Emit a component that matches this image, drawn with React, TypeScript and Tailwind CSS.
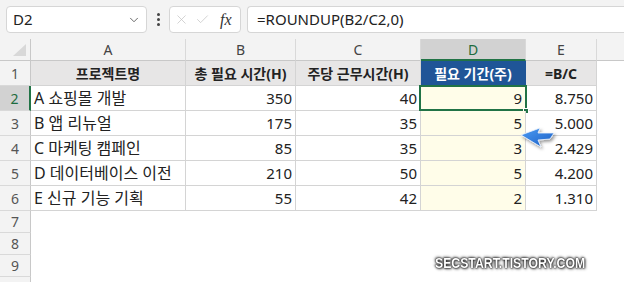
import { ChevronDown, X, Check } from 'lucide-react';

const FONT = { fontFamily: '"Noto Sans", "Noto Sans CJK KR", sans-serif' };

const colW = ['w-[155px]', 'w-[110px]', 'w-[125px]', 'w-[105px]', 'w-[71px]'];
const letters = ['A', 'B', 'C', 'D', 'E'];

const data: [string, number, number, number, string][] = [
  ['A 쇼핑몰 개발', 350, 40, 9, '8.750'],
  ['B 앱 리뉴얼', 175, 35, 5, '5.000'],
  ['C 마케팅 캠페인', 85, 35, 3, '2.429'],
  ['D 데이터베이스 이전', 210, 50, 5, '4.200'],
  ['E 신규 기능 기획', 55, 42, 2, '1.310'],
];

function RowHead({ n, h, active }: { n?: number; h: string; active?: boolean }) {
  return (
    <div
      className={
        'w-[31px] shrink-0 flex items-center justify-center text-[14px] border-b border-[#d9d9d9] ' +
        h +
        (active
          ? ' bg-[#d2d2d2] text-[#1d6b3e] border-r-2 border-r-[#217346]'
          : ' bg-[#f3f3f3] text-[#555] border-r border-r-[#c8c8c8]')
      }
    >
      {n}
    </div>
  );
}

function Arrow() {
  return (
    <svg width="42" height="28" viewBox="0 0 42 28" className="absolute left-[518px] top-[124px]">
      <defs>
        <linearGradient id="ag" x1="0" y1="0" x2="1" y2="1">
          <stop offset="0" stopColor="#4b9cf2" />
          <stop offset="1" stopColor="#1b5ec6" />
        </linearGradient>
        <filter id="sh" x="-30%" y="-30%" width="170%" height="170%">
          <feDropShadow dx="1.5" dy="2" stdDeviation="1.5" floodColor="#000" floodOpacity="0.4" />
        </filter>
      </defs>
      <polygon
        points="3,11 22,4 20,9 36,9 32,15 20,16 23,23"
        fill="url(#ag)"
        stroke="#eef4fd"
        strokeWidth="0.8"
        strokeLinejoin="round"
        filter="url(#sh)"
      />
    </svg>
  );
}

export default function App() {
  return (
    <div className="relative w-[624px] h-[282px] overflow-hidden bg-white text-[#222]" style={FONT}>
      {/* formula bar */}
      <div className="h-[39px] bg-[#f3f3f3] flex items-center pl-[6px] gap-[6px]">
        <div className="w-[141px] h-[27px] bg-white border border-[#d6d6d6] rounded-[4px] flex items-center justify-between pl-[6px] pr-[5px]">
          <span className="text-[15px]">D2</span>
          <ChevronDown className="w-[14px] h-[14px] text-[#555]" strokeWidth={1.5} />
        </div>
        <div className="w-[10px] flex flex-col items-center gap-[2px]">
          <span className="w-[3px] h-[3px] rounded-full bg-[#444]" />
          <span className="w-[3px] h-[3px] rounded-full bg-[#444]" />
          <span className="w-[3px] h-[3px] rounded-full bg-[#444]" />
        </div>
        <div className="w-[72px] h-[27px] bg-white border border-[#d6d6d6] rounded-[4px] flex items-center pl-[4px] gap-[6px]">
          <X className="w-[15px] h-[15px] text-[#c4c4c4]" strokeWidth={1.2} />
          <Check className="w-[15px] h-[15px] text-[#c4c4c4]" strokeWidth={1.2} />
          <span className="ml-[4px] text-[16px] italic text-[#333]" style={{ fontFamily: '"Liberation Serif", serif' }}>
            fx
          </span>
        </div>
        <div className="flex-1 h-[27px] bg-white border border-[#d6d6d6] border-r-0 rounded-l-[4px] flex items-center pl-[9px] text-[15px]">
          =ROUNDUP(B2/C2,0)
        </div>
      </div>

      {/* column headers */}
      <div className="flex h-[22px] bg-[#f3f3f3] text-[14px] text-[#444]">
        <div className="w-[31px] shrink-0 border-r border-b border-[#c8c8c8] flex items-end justify-end pr-[4px] pb-[4px]">
          <div className="w-0 h-0 border-l-[13px] border-l-transparent border-b-[12px] border-b-[#d8d8d8]" />
        </div>
        {letters.map((l, i) => (
          <div
            key={l}
            className={
              colW[i] +
              ' shrink-0 flex items-center justify-center border-r border-[#d9d9d9] ' +
              (l === 'D' ? 'bg-[#d2d2d2] text-[#1d6b3e] border-b-2 border-b-[#217346]' : 'border-b border-b-[#c8c8c8]')
            }
          >
            {l}
          </div>
        ))}
        <div className="flex-1 border-b border-[#c8c8c8]" />
      </div>

      {/* row 1: table header */}
      <div className="flex h-[25px]">
        <RowHead n={1} h="h-[25px]" />
        {['프로젝트명', '총 필요 시간(H)', '주당 근무시간(H)', '필요 기간(주)', '=B/C'].map((t, i) => (
          <div
            key={t}
            className={
              colW[i] +
              ' shrink-0 flex items-center justify-center font-bold text-[14px] border-r border-b ' +
              (i === 3 ? 'bg-[#1f5597] text-white border-[#1f5597]' : 'bg-[#e7e6e6] border-[#d4d4d4]')
            }
          >
            {t}
          </div>
        ))}
      </div>

      {/* data rows */}
      {data.map((r, ri) => (
        <div key={ri} className="flex h-[25px] text-[15px]">
          <RowHead n={ri + 2} h="h-[25px]" active={ri === 0} />
          <div className={colW[0] + ' shrink-0 flex items-center pl-[3px] text-[16px] border-r border-b border-[#d4d4d4]'}>{r[0]}</div>
          <div className={colW[1] + ' shrink-0 flex items-center justify-end pr-[3px] border-r border-b border-[#d4d4d4]'}>{r[1]}</div>
          <div className={colW[2] + ' shrink-0 flex items-center justify-end pr-[3px] border-r border-b border-[#d4d4d4]'}>{r[2]}</div>
          <div className={colW[3] + ' relative shrink-0 flex items-center justify-end pr-[3px] bg-[#fffde9] border-r border-b border-[#d4d4d4]'}>
            {r[3]}
            {ri === 0 && (
              <>
                <div className="absolute left-[-2px] top-[-1px] right-[-2px] bottom-[-1px] border-2 border-[#217346]" />
                <div className="absolute right-[-4px] bottom-[-4px] w-[6px] h-[6px] bg-[#217346] border border-white" />
              </>
            )}
          </div>
          <div className={colW[4] + ' shrink-0 flex items-center justify-end pr-[3px] border-r border-b border-[#d4d4d4]'}>{r[4]}</div>
        </div>
      ))}

      {/* empty rows */}
      {[7, 8, 9].map((n) => (
        <div key={n} className="flex h-[22px]">
          <RowHead n={n} h="h-[22px]" />
        </div>
      ))}
      <div className="flex h-[22px]">
        <RowHead h="h-[22px]" />
      </div>

      <Arrow />

      <div
        className="absolute left-[435px] top-[256px] text-[14px] font-bold text-white scale-x-[0.875] origin-left whitespace-nowrap leading-none"
        style={{
          fontFamily: '"Liberation Sans", sans-serif',
          textShadow: '0 0 1px #111, 0 0 2px #222, 1px 1px 3px #333, -1px -1px 3px #555',
        }}
      >
        SECSTART.TISTORY.COM
      </div>
    </div>
  );
}
